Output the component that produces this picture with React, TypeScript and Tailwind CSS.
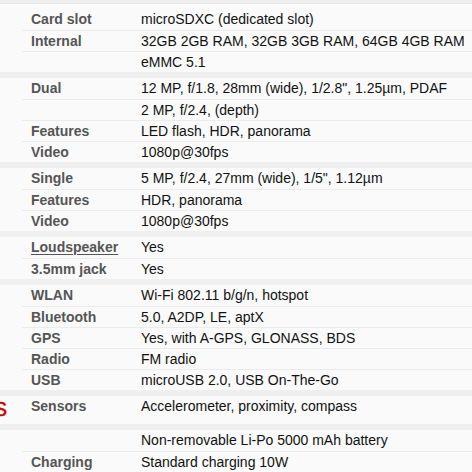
type Row = { label: string; value: string; link?: boolean };
type Section = { title: string; rows: Row[]; minH?: string };

const sections: Section[] = [
  {
    title: "Memory",
    rows: [
      { label: "Card slot", value: "microSDXC (dedicated slot)" },
      { label: "Internal", value: "32GB 2GB RAM, 32GB 3GB RAM, 64GB 4GB RAM" },
      { label: "", value: "eMMC 5.1" },
    ],
  },
  {
    title: "Main Camera",
    rows: [
      { label: "Dual", value: "12 MP, f/1.8, 28mm (wide), 1/2.8\", 1.25µm, PDAF" },
      { label: "", value: "2 MP, f/2.4, (depth)" },
      { label: "Features", value: "LED flash, HDR, panorama" },
      { label: "Video", value: "1080p@30fps" },
    ],
  },
  {
    title: "Selfie camera",
    rows: [
      { label: "Single", value: "5 MP, f/2.4, 27mm (wide), 1/5\", 1.12µm" },
      { label: "Features", value: "HDR, panorama" },
      { label: "Video", value: "1080p@30fps" },
    ],
  },
  {
    title: "Sound",
    rows: [
      { label: "Loudspeaker", value: "Yes", link: true },
      { label: "3.5mm jack", value: "Yes" },
    ],
  },
  {
    title: "Comms",
    rows: [
      { label: "WLAN", value: "Wi-Fi 802.11 b/g/n, hotspot" },
      { label: "Bluetooth", value: "5.0, A2DP, LE, aptX" },
      { label: "GPS", value: "Yes, with A-GPS, GLONASS, BDS" },
      { label: "Radio", value: "FM radio" },
      { label: "USB", value: "microUSB 2.0, USB On-The-Go" },
    ],
  },
  {
    title: "Features",
    minH: "min-h-[28px]",
    rows: [{ label: "Sensors", value: "Accelerometer, proximity, compass" }],
  },
  {
    title: "Battery",
    rows: [
      { label: "", value: "Non-removable Li-Po 5000 mAh battery" },
      { label: "Charging", value: "Standard charging 10W" },
    ],
  },
];

function SpecSection({ s, first }: { s: Section; first?: boolean }) {
  return (
    <div className={`flex bg-[#fafafa] ${s.minH ?? ""} ${first ? "pt-[5px]" : ""}`}>
      <div className="w-[22px] shrink-0 overflow-hidden flex justify-end pr-[15px]">
        {s.title === "Features" && (
          <span className="text-[20px] leading-[24px] pt-[1px] uppercase text-[#c80000] whitespace-nowrap [-webkit-text-stroke:0.5px_#c80000]">
            {s.title}
          </span>
        )}
      </div>
      <div className="flex-1 flex flex-col">
        {s.rows.map((r, i) => (
          <div
            key={i}
            className={`flex h-[21px] items-center ${i > 0 ? "border-t border-[#ececec]" : ""}`}
          >
            <div className="w-[119px] shrink-0 pl-[9px] font-bold text-[#555] whitespace-nowrap">
              {r.link ? (
                <span className="underline decoration-[#555] underline-offset-[2px]">{r.label}</span>
              ) : (
                r.label
              )}
            </div>
            <div className="flex-1 text-[#111] whitespace-nowrap">{r.value}</div>
          </div>
        ))}
      </div>
    </div>
  );
}

export default function App() {
  return (
    <div
      className="w-[472px] h-[472px] overflow-hidden bg-[#fafafa] text-[14px] leading-[21px]"
      style={{ fontFamily: '"Liberation Sans", Arial, sans-serif' }}
    >
      <div className="h-[4px] bg-[#efefef] border-b border-[#e4e4e4]" />
      {sections.map((s, i) => (
        <div key={s.title}>
          {i > 0 && <div className="h-[6px] bg-[#efefef]" />}
          <SpecSection s={s} first={i === 0} />
        </div>
      ))}
    </div>
  );
}
